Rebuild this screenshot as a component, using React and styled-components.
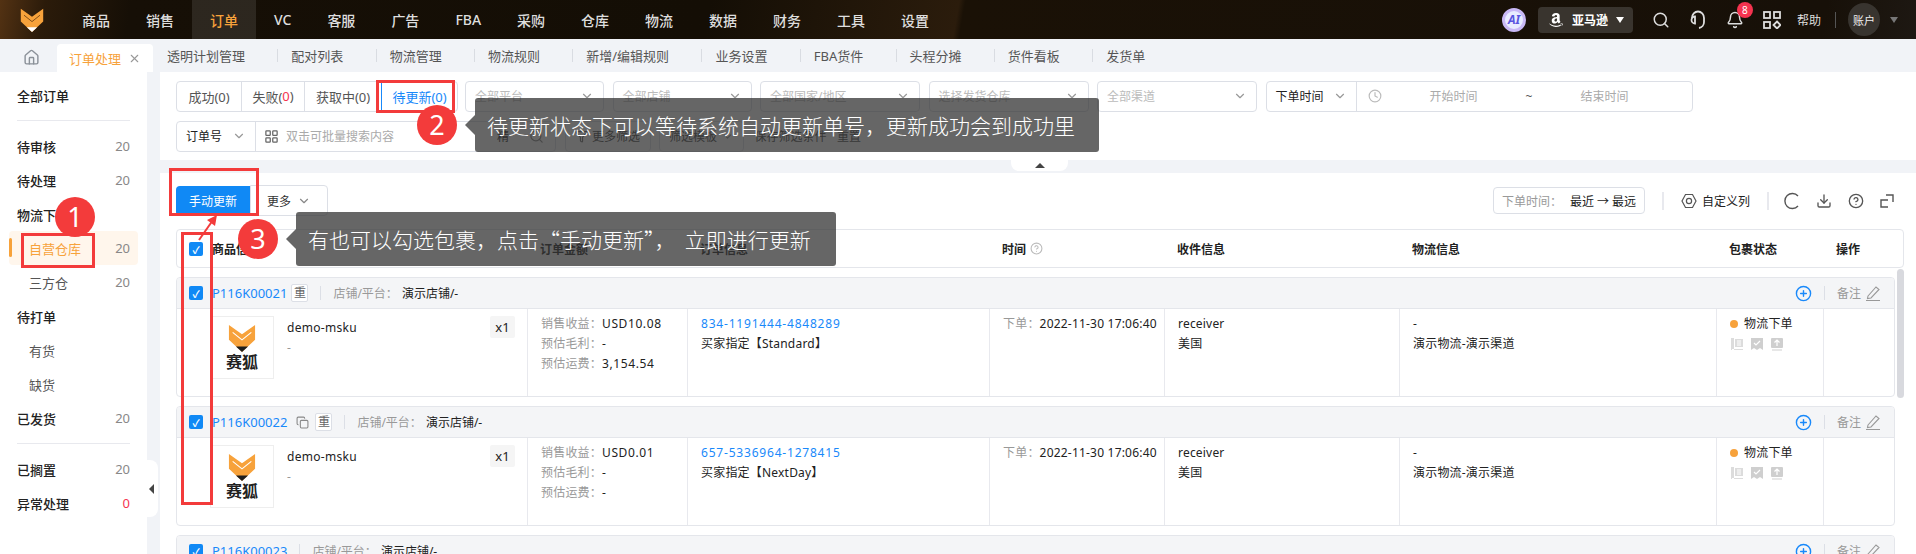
import React from "react";
import styled, { createGlobalStyle } from "styled-components";
import {
  House,
  X,
  ChevronDown,
  Search,
  Bell,
  Clock,
  Filter,
  Download,
  CircleHelp,
  CirclePlus,
  Copy,
  LayoutGrid,
} from "lucide-react";
import { FaAmazon } from "react-icons/fa";

const navItems = ["商品", "销售", "订单", "VC", "客服", "广告", "FBA", "采购", "仓库", "物流", "数据", "财务", "工具", "设置"];
const tabs = ["透明计划管理", "配对列表", "物流管理", "物流规则", "新增/编辑规则", "业务设置", "FBA货件", "头程分摊", "货件看板", "发货单"];

const sideItems = [
  { label: "全部订单", top: true },
  { divider: true },
  { label: "待审核", count: 20, top: true },
  { label: "待处理", count: 20, top: true },
  { label: "物流下单", top: true },
  { label: "自营仓库", count: 20, active: true },
  { label: "三方仓", count: 20 },
  { label: "待打单", top: true },
  { label: "有货" },
  { label: "缺货" },
  { label: "已发货", count: 20, top: true },
  { divider: true },
  { label: "已搁置", count: 20, top: true },
  { label: "异常处理", count: 0, top: true, danger: true },
];

const columns = [
  { label: "商品信息", left: 35 },
  { label: "订单金额" },
  { label: "订单信息" },
  { label: "时间", help: true },
  { label: "收件信息" },
  { label: "物流信息" },
  { label: "包裹状态" },
  { label: "操作" },
];

const orders = [
  {
    id: "P116K00021",
    income: "USD10.08",
    freight: "3,154.54",
    number: "834-1191444-4848289",
    buyer: "买家指定【Standard】",
  },
  {
    id: "P116K00022",
    copy: true,
    income: "USD0.01",
    freight: "-",
    number: "657-5336964-1278415",
    buyer: "买家指定【NextDay】",
  },
  { id: "P116K00023", short: true },
];

function Fox({ size, tip = "#1d1d1d", chevron = "#fff" }) {
  return (
    <svg width={size} height={size} viewBox="0 0 30 30">
      <path d="M1 1 L15 11 L29 1 V17 L15 30 L1 17 Z" fill="#f7a23b" />
      <path d="M5 9 L15 17 L25 9" fill="none" stroke={chevron} strokeWidth="1.2" />
      <path d="M8.5 24 H21.5 L15 30 Z" fill={tip} />
    </svg>
  );
}

function Headset() {
  return (
    <svg width="18" height="20" viewBox="0 0 18 20" fill="none" stroke="#ddd" strokeWidth="1.8">
      <path d="M3 8 A6 6.5 0 0 1 15 8 V12 A6 6 0 0 1 10 18" />
      <path d="M6 6.5 A3.5 3.5 0 0 0 6 13.5 Z" />
    </svg>
  );
}

function AppsIcon() {
  return (
    <svg width="18" height="18" viewBox="0 0 18 18" fill="none" stroke="#ddd" strokeWidth="1.8">
      <rect x="1" y="1" width="6" height="6" />
      <rect x="11" y="1" width="6" height="6" />
      <rect x="1" y="11" width="6" height="6" />
      <path d="M14 10.5 L17.5 14 L14 17.5 L10.5 14 Z" />
    </svg>
  );
}

function NutIcon() {
  return (
    <svg width="16" height="16" viewBox="0 0 16 16" fill="none" stroke="#555" strokeWidth="1.2">
      <path d="M4.5 1.5 H11.5 L15 8 L11.5 14.5 H4.5 L1 8 Z" />
      <circle cx="8" cy="8" r="2.6" />
    </svg>
  );
}

function RefreshArc() {
  return (
    <svg width="16" height="18" viewBox="0 0 16 18" fill="none" stroke="#555" strokeWidth="1.4">
      <path d="M14 4 A7.5 7.5 0 1 0 14 14" />
    </svg>
  );
}

function ExpandIcon() {
  return (
    <svg width="14" height="14" viewBox="0 0 14 14" fill="none" stroke="#555" strokeWidth="1.4">
      <path d="M6 1 H13 V8" />
      <path d="M8 6 H1 V13 H8" />
    </svg>
  );
}

function PenIcon() {
  return (
    <svg width="16" height="16" viewBox="0 0 16 16" fill="none" stroke="#999" strokeWidth="1.1">
      <path d="M3 11 L11 2 L14 4.5 L6 13 L2.5 13.5 Z" />
      <path d="M1 15.5 H15" />
    </svg>
  );
}

function PackIcons() {
  return (
    <PackRow>
      <svg width="14" height="14" viewBox="0 0 14 14">
        <path d="M1 1 H4 V13 H1 Z M5 2 H13 V10 H5 Z M2 13 H13 V12 H2 Z" fill="#dcdcdc" />
        <path d="M7 4 H11 M7 6 H11 M7 8 H11" stroke="#fff" />
      </svg>
      <svg width="14" height="14" viewBox="0 0 14 14">
        <path d="M1 1 H13 V13 L10 11 L7 13 L4 11 L1 13 Z" fill="#cfcfcf" />
        <path d="M4 6 L6 8 L10 4" stroke="#fff" strokeWidth="1.2" fill="none" />
      </svg>
      <svg width="14" height="14" viewBox="0 0 14 14">
        <rect x="1" y="1" width="12" height="10" rx="1" fill="#cfcfcf" />
        <path d="M7 9 V3 M4.5 5.5 L7 3 L9.5 5.5" stroke="#fff" strokeWidth="1.2" fill="none" />
        <path d="M2 13 H12" stroke="#cfcfcf" strokeWidth="1.2" />
      </svg>
    </PackRow>
  );
}

function Dropdown({ width, placeholder }) {
  return (
    <Select $w={width}>
      <span>{placeholder}</span>
      <ChevronDown size={14} color="#999" />
    </Select>
  );
}

function OrderCard({ order }) {
  return (
    <Card>
      <CardHead>
        <CheckBox>✓</CheckBox>
        <OrderId>{order.id}</OrderId>
        {order.copy && <CopyWrap><Copy size={13} color="#888" /></CopyWrap>}
        {!order.short && <RepeatTag>重</RepeatTag>}
        <ThinLine />
        <Muted>店铺/平台：</Muted>
        <span>演示店铺/-</span>
        <CardHeadRight>
          <CirclePlus size={17} color="#1989fa" />
          <ThinLine />
          <Muted>备注</Muted>
          <PenIcon />
        </CardHeadRight>
      </CardHead>
      {order.number && (
        <CardBody>
          <GoodsCell>
            <ProductImage>
              <Fox size={28} />
              <strong>赛狐</strong>
            </ProductImage>
            <GoodsText>
              <SkuName>demo-msku</SkuName>
              <Muted>-</Muted>
            </GoodsText>
            <QtyTag>x1</QtyTag>
          </GoodsCell>
          <Cell>
            <InfoLine><Muted>销售收益：</Muted><Amount>{order.income}</Amount></InfoLine>
            <InfoLine><Muted>预估毛利：</Muted>-</InfoLine>
            <InfoLine><Muted>预估运费：</Muted><Amount>{order.freight}</Amount></InfoLine>
          </Cell>
          <Cell>
            <InfoLine><LinkText>{order.number}</LinkText></InfoLine>
            <InfoLine>{order.buyer}</InfoLine>
          </Cell>
          <Cell>
            <InfoLine><Muted>下单：</Muted>2022-11-30 17:06:40</InfoLine>
          </Cell>
          <Cell>
            <InfoLine>receiver</InfoLine>
            <InfoLine>美国</InfoLine>
          </Cell>
          <Cell>
            <InfoLine>-</InfoLine>
            <InfoLine>演示物流-演示渠道</InfoLine>
          </Cell>
          <Cell>
            <InfoLine><StatusDot />物流下单</InfoLine>
            <PackIcons />
          </Cell>
          <Cell />
        </CardBody>
      )}
    </Card>
  );
}

export default function App() {
  return (
    <Page>
      <GlobalStyle />
      <TopBar>
        <LogoBox><Fox size={24} tip="#fff" chevron="#7a4a16" /></LogoBox>
        <Nav>
          {navItems.map((item) => (
            <NavItem key={item} $active={item === "订单"}>{item}</NavItem>
          ))}
        </Nav>
        <TopRight>
          <AiBadge>AI</AiBadge>
          <PlatformBox>
            <FaAmazon size={16} color="#fff" />
            <span>亚马逊</span>
            <Caret $color="#fff" />
          </PlatformBox>
          <TopIcon><Search size={18} color="#ddd" /></TopIcon>
          <TopIcon><Headset /></TopIcon>
          <TopIcon>
            <Bell size={18} color="#ddd" />
            <NoticeBadge>8</NoticeBadge>
          </TopIcon>
          <TopIcon><AppsIcon /></TopIcon>
          <HelpText>帮助</HelpText>
          <TopLine />
          <Avatar>账户</Avatar>
          <Caret $color="#777" />
        </TopRight>
      </TopBar>

      <TabBar>
        <HomeTab><House size={17} color="#8b9199" /></HomeTab>
        <ActiveTab>
          订单处理
          <X size={13} color="#999" />
        </ActiveTab>
        {tabs.map((tab, index) => (
          <Tab key={tab} $last={index === tabs.length - 1}>{tab}</Tab>
        ))}
      </TabBar>

      <Body>
        <Sidebar>
          {sideItems.map((item, index) =>
            item.divider ? (
              <SideDivider key={index} />
            ) : (
              <SideRow key={item.label} $top={item.top} $active={item.active}>
                <span>{item.label}</span>
                {item.count !== undefined && <SideCount $danger={item.danger}>{item.count}</SideCount>}
              </SideRow>
            )
          )}
          <CollapseHandle />
        </Sidebar>

        <Main>
          <FilterPanel>
            <FilterRow>
              <StatusGroup>
                <StatusButton $w={64}>成功(0)</StatusButton>
                <StatusButton $w={63}>失败(<Danger>0</Danger>)</StatusButton>
                <StatusButton $w={77}>获取中(0)</StatusButton>
                <StatusButton $w={76} $active>待更新(0)</StatusButton>
              </StatusGroup>
              <Dropdown width={139} placeholder="全部平台" />
              <Dropdown width={139} placeholder="全部店铺" />
              <Dropdown width={160} placeholder="全部国家/地区" />
              <Dropdown width={160} placeholder="选择发货仓库" />
              <Dropdown width={160} placeholder="全部渠道" />
              <JoinedField $w={427}>
                <JoinedSelect $w={90}>
                  下单时间
                  <ChevronDown size={14} color="#999" />
                </JoinedSelect>
                <DateRange>
                  <Clock size={14} color="#bbb" />
                  <DateText>开始时间</DateText>
                  <Tilde>~</Tilde>
                  <DateText>结束时间</DateText>
                </DateRange>
              </JoinedField>
            </FilterRow>
            <FilterRow>
              <JoinedField $w={380}>
                <JoinedSelect $w={79}>
                  订单号
                  <ChevronDown size={14} color="#999" />
                </JoinedSelect>
                <BatchInput>
                  <LayoutGrid size={15} color="#666" />
                  <Placeholder>双击可批量搜索内容</Placeholder>
                  <Exact>精</Exact>
                  <Search size={15} color="#888" />
                </BatchInput>
              </JoinedField>
              <GhostButton $w={86}><Filter size={13} color="#666" />更多筛选</GhostButton>
              <GhostButton $w={85}>筛选模板<ChevronDown size={13} color="#999" /></GhostButton>
              <PlainAction>保存筛选条件</PlainAction>
              <PlainAction>重置</PlainAction>
            </FilterRow>
            <FoldTab />
          </FilterPanel>

          <ListPanel>
            <Toolbar>
              <PrimaryButton>手动更新</PrimaryButton>
              <MoreButton>更多<ChevronDown size={14} color="#888" /></MoreButton>
              <ToolbarRight>
                <SortBox>
                  <SortLabel>下单时间：</SortLabel>
                  最近<SortArrow>→</SortArrow>最远
                </SortBox>
                <ToolLine />
                <ColumnSetting><NutIcon />自定义列</ColumnSetting>
                <ToolLine />
                <ToolIcons>
                  <RefreshArc />
                  <Download size={16} color="#555" />
                  <CircleHelp size={16} color="#555" />
                  <ExpandIcon />
                </ToolIcons>
              </ToolbarRight>
            </Toolbar>

            <TableHead>
              <HeadCheck>✓</HeadCheck>
              {columns.map((col) => (
                <HeadCell key={col.label} $left={col.left}>
                  {col.label}
                  {col.help && <CircleHelp size={13} color="#bbb" />}
                </HeadCell>
              ))}
            </TableHead>

            <CardList>
              {orders.map((order) => (
                <OrderCard key={order.id} order={order} />
              ))}
            </CardList>
            <ScrollThumb />
          </ListPanel>
        </Main>
      </Body>

      <RedFrame $x={376} $y={80} $w={79} $h={33} />
      <RedFrame $x={169} $y={168} $w={90} $h={48} />
      <RedFrame $x={21} $y={233} $w={74} $h={35} />
      <RedFrame $x={181} $y={232} $w={32} $h={273} />
      <ArrowMark width="24" height="28" viewBox="0 0 24 28">
        <path d="M3 26 L17 6" stroke="#f33b3b" strokeWidth="2" />
        <path d="M21 1 L11 6 L19 12 Z" fill="#f33b3b" />
      </ArrowMark>

      <StepDot $x={55} $y={197}>1</StepDot>
      <StepDot $x={417} $y={105}>2</StepDot>
      <StepDot $x={238} $y={219}>3</StepDot>
      <Callout $x={475} $y={98} $w={624} $h={54}>待更新状态下可以等待系统自动更新单号，更新成功会到成功里</Callout>
      <Callout $x={296} $y={212} $w={540} $h={54}>有也可以勾选包裹，点击“手动更新”，{"\u00a0\u00a0"}立即进行更新</Callout>
    </Page>
  );
}

const GlobalStyle = createGlobalStyle`
  html, body {
    margin: 0;
    padding: 0;
    background: #f1f3f7;
  }
  * {
    box-sizing: border-box;
  }
`;

const Page = styled.div`
  position: relative;
  width: 1916px;
  height: 554px;
  overflow: hidden;
  background: #f1f3f7;
  color: #222;
  font-family: "Noto Sans", "Noto Sans CJK SC", sans-serif;
  font-size: 12px;
`;

const TopBar = styled.header`
  display: flex;
  align-items: center;
  height: 39px;
  background: linear-gradient(100deg, #533213 0, #2b1b0a 45px, #160f06 130px, #140e05 700px, #2b1c0c 945px, #1a1106 951px, #171008 1800px, #1f1a15 1916px);
`;

const LogoBox = styled.div`
  display: flex;
  justify-content: center;
  width: 64px;
`;

const Nav = styled.nav`
  display: flex;
  height: 100%;
`;

const NavItem = styled.div`
  display: flex;
  align-items: center;
  padding: 0 18px;
  font-size: 14px;
  font-weight: 500;
  color: ${(p) => (p.$active ? "#f7a23b" : "#dedede")};
  background: ${(p) => (p.$active ? "rgba(255,255,255,0.1)" : "none")};
`;

const TopRight = styled.div`
  display: flex;
  align-items: center;
  margin-left: auto;
  padding-right: 18px;
`;

const AiBadge = styled.div`
  display: flex;
  align-items: center;
  justify-content: center;
  width: 24px;
  height: 24px;
  border-radius: 50%;
  border: 3px solid #c8b8f5;
  background: #e8ecff;
  color: #5a55e0;
  font-size: 12px;
  font-weight: 700;
  font-style: italic;
`;

const PlatformBox = styled.div`
  display: flex;
  align-items: center;
  gap: 8px;
  width: 95px;
  height: 26px;
  margin: 0 10px 0 12px;
  padding-left: 10px;
  border-radius: 4px;
  background: #39342e;
  color: #fff;
  font-weight: 700;
`;

const Caret = styled.i`
  width: 0;
  height: 0;
  border-left: 4px solid transparent;
  border-right: 4px solid transparent;
  border-top: 6px solid ${(p) => p.$color};
`;

const TopIcon = styled.div`
  position: relative;
  display: flex;
  justify-content: center;
  width: 37px;
`;

const NoticeBadge = styled.span`
  position: absolute;
  top: -9px;
  left: 20px;
  width: 16px;
  height: 16px;
  border-radius: 50%;
  background: #f5334f;
  color: #fff;
  font-size: 10px;
  line-height: 16px;
  text-align: center;
`;

const HelpText = styled.span`
  margin-left: 6px;
  color: #ddd;
`;

const TopLine = styled.i`
  width: 1px;
  height: 16px;
  margin: 0 12px 0 14px;
  background: #555;
`;

const Avatar = styled.div`
  display: flex;
  align-items: center;
  justify-content: center;
  width: 32px;
  height: 33px;
  margin-right: 10px;
  border-radius: 50%;
  background: #38342f;
  color: #eee;
  font-size: 11px;
`;

const TabBar = styled.div`
  display: flex;
  align-items: flex-end;
  height: 33px;
`;

const HomeTab = styled.div`
  display: flex;
  justify-content: center;
  width: 57px;
  padding: 0 0 6px 6px;
`;

const ActiveTab = styled.div`
  display: flex;
  align-items: center;
  justify-content: space-between;
  width: 96px;
  height: 28px;
  margin-right: 14px;
  padding: 0 12px 0 12px;
  border-radius: 4px 4px 0 0;
  background: #fff;
  color: #f7a23b;
  font-size: 13px;
`;

const Tab = styled.div`
  display: flex;
  align-items: center;
  height: 13px;
  margin: 0 13px 10px 0;
  padding-right: 32.3px;
  border-right: ${(p) => (p.$last ? "none" : "1px solid #d9dce2")};
  color: #555;
  font-size: 13px;
`;

const Body = styled.div`
  display: flex;
  height: 482px;
`;

const Sidebar = styled.aside`
  position: relative;
  width: 147px;
  margin-right: 13px;
  padding: 6px 17px 0;
  background: #fff;
`;

const SideDivider = styled.div`
  height: 1px;
  margin: 8px 0;
  background: #e8e9ee;
`;

const SideRow = styled.div`
  position: relative;
  display: flex;
  align-items: center;
  justify-content: space-between;
  height: 34px;
  margin: 0 ${(p) => (p.$active ? "-8px" : "0")};
  padding: 0 ${(p) => (p.$active ? "8px" : "0")} 0 ${(p) => (p.$active ? "20px" : p.$top ? "0" : "12px")};
  border-radius: 4px;
  background: ${(p) => (p.$active ? "#fff6ec" : "none")};
  color: ${(p) => (p.$active ? "#f7a23b" : p.$top ? "#222" : "#555")};
  font-size: 13px;
  font-weight: ${(p) => (p.$top ? 500 : 400)};

  ${(p) =>
    p.$active &&
    `&::before {
      content: "";
      position: absolute;
      left: 0;
      top: 7px;
      width: 3px;
      height: 19px;
      border-radius: 2px;
      background: #f7a23b;
    }`}
`;

const SideCount = styled.span`
  color: ${(p) => (p.$danger ? "#f5334f" : "#888")};
  font-weight: 400;
`;

const CollapseHandle = styled.div`
  position: absolute;
  top: 388px;
  right: -11px;
  width: 11px;
  height: 57px;
  border-radius: 0 8px 8px 0;
  background: #fff;

  &::after {
    content: "";
    position: absolute;
    top: 24px;
    left: 2px;
    border-top: 5px solid transparent;
    border-bottom: 5px solid transparent;
    border-right: 5px solid #444;
  }
`;

const Main = styled.main`
  display: flex;
  flex: 1;
  flex-direction: column;
  gap: 13px;
  min-width: 0;
`;

const FilterPanel = styled.section`
  position: relative;
  display: flex;
  flex-direction: column;
  flex-shrink: 0;
  gap: 8px;
  height: 88px;
  padding: 8px 16px 0;
  background: #fff;
`;

const FilterRow = styled.div`
  display: flex;
  align-items: center;
  gap: 8.5px;
  height: 32px;
`;

const StatusGroup = styled.div`
  display: flex;
  height: 31px;
  margin-right: -1.5px;
  border: 1px solid #dcdfe6;
  border-radius: 4px;
  overflow: hidden;
`;

const StatusButton = styled.div`
  display: flex;
  align-items: center;
  justify-content: center;
  width: ${(p) => p.$w}px;
  border-left: 1px solid ${(p) => (p.$active ? "#1989fa" : "#dcdfe6")};
  color: ${(p) => (p.$active ? "#1989fa" : "#555")};
  font-size: 13px;

  &:first-child {
    border-left: none;
  }
`;

const Danger = styled.span`
  color: #f5334f;
`;

const Select = styled.div`
  display: flex;
  align-items: center;
  justify-content: space-between;
  width: ${(p) => p.$w}px;
  height: 31px;
  padding: 0 9px 0 9px;
  border: 1px solid #dcdfe6;
  border-radius: 4px;
  color: #bbb;
  font-size: 12px;
`;

const JoinedField = styled.div`
  display: flex;
  width: ${(p) => p.$w}px;
  height: 31px;
  border: 1px solid #dcdfe6;
  border-radius: 4px;
`;

const JoinedSelect = styled.div`
  display: flex;
  align-items: center;
  justify-content: space-between;
  flex-shrink: 0;
  width: ${(p) => p.$w}px;
  padding: 0 9px;
  border-right: 1px solid #dcdfe6;
  color: #222;
`;

const DateRange = styled.div`
  display: flex;
  flex: 1;
  align-items: center;
  padding: 0 15px 0 11px;
`;

const DateText = styled.span`
  flex: 1;
  color: #aaa;
  text-align: center;
`;

const Tilde = styled.span`
  color: #555;
`;

const BatchInput = styled.div`
  display: flex;
  flex: 1;
  align-items: center;
  padding: 0 11px 0 8px;
`;

const Placeholder = styled.span`
  flex: 1;
  margin-left: 7px;
  color: #aaa;
`;

const Exact = styled.span`
  margin-right: 20px;
  color: #222;
`;

const GhostButton = styled.div`
  display: flex;
  align-items: center;
  justify-content: center;
  gap: 4px;
  width: ${(p) => p.$w}px;
  height: 31px;
  border: 1px solid #dcdfe6;
  border-radius: 4px;
  color: #444;
`;

const PlainAction = styled.span`
  margin-left: 2px;
  color: #444;
`;

const FoldTab = styled.div`
  position: absolute;
  top: 88px;
  left: 851px;
  width: 57px;
  height: 11px;
  border-radius: 0 0 8px 8px;
  background: #fff;

  &::after {
    content: "";
    position: absolute;
    top: 3px;
    left: 24px;
    border-left: 5px solid transparent;
    border-right: 5px solid transparent;
    border-bottom: 5px solid #444;
  }
`;

const ListPanel = styled.section`
  position: relative;
  flex: 1;
  min-height: 0;
  padding: 12px 12px 0 16px;
  background: #fff;
  overflow: hidden;
`;

const Toolbar = styled.div`
  display: flex;
  align-items: center;
  height: 31px;
`;

const PrimaryButton = styled.div`
  display: flex;
  align-items: center;
  justify-content: center;
  width: 74px;
  height: 30px;
  border-radius: 4px 0 0 4px;
  background: #1089f5;
  color: #fff;
`;

const MoreButton = styled.div`
  display: flex;
  align-items: center;
  justify-content: center;
  gap: 6px;
  width: 78px;
  height: 31px;
  border: 1px solid #dcdfe6;
  border-radius: 0 4px 4px 0;
  color: #333;
`;

const ToolbarRight = styled.div`
  display: flex;
  align-items: center;
  margin-left: auto;
`;

const SortBox = styled.div`
  display: flex;
  align-items: center;
  height: 27px;
  padding: 0 8px;
  border: 1px solid #dcdfe6;
  border-radius: 4px;
`;

const SortLabel = styled.span`
  margin-right: 8px;
  color: #999;
`;

const SortArrow = styled.span`
  margin: 0 3px;
`;

const ToolLine = styled.i`
  width: 2px;
  height: 18px;
  margin: 0 17px;
  background: #e8e9ee;
`;

const ColumnSetting = styled.div`
  display: flex;
  align-items: center;
  gap: 5px;
`;

const ToolIcons = styled.div`
  display: flex;
  align-items: center;
  gap: 16px;
  margin-left: -2px;
  padding-right: 10px;
`;

const TableHead = styled.div`
  position: relative;
  display: grid;
  grid-template-columns: 350px 160px 302px 175px 235px 317px 107px 1fr;
  align-items: center;
  height: 39px;
  margin-top: 13px;
  border: 1px solid #e4e6eb;
  border-radius: 4px;
`;

const HeadCell = styled.div`
  display: flex;
  align-items: center;
  gap: 4px;
  padding-left: ${(p) => p.$left || 13}px;
  color: #222;
  font-weight: 700;
`;

const CheckBox = styled.span`
  display: flex;
  align-items: center;
  justify-content: center;
  flex-shrink: 0;
  width: 14px;
  height: 14px;
  margin-right: 5px;
  border-radius: 2px;
  background: #1089f5;
  color: #fff;
  font-size: 10px;
  font-weight: 700;
`;

const HeadCheck = styled(CheckBox)`
  position: absolute;
  top: 12px;
  left: 12px;
`;

const CardList = styled.div`
  display: flex;
  flex-direction: column;
  gap: 9px;
  margin: 9px 9px 0 0;
`;

const Card = styled.article`
  border: 1px solid #e4e6eb;
  border-radius: 4px;
  overflow: hidden;
`;

const CardHead = styled.div`
  display: flex;
  align-items: center;
  gap: 4px;
  height: 31px;
  padding: 0 13px 0 12px;
  border-bottom: 1px solid #e4e6eb;
  background: #f4f5f7;
`;

const OrderId = styled.span`
  color: #1989fa;
  font-size: 13px;
`;

const CopyWrap = styled.span`
  display: flex;
  margin: 0 2px 0 5px;
`;

const RepeatTag = styled.span`
  width: 17px;
  height: 18px;
  border: 1px solid #dcdfe6;
  border-radius: 2px;
  background: #fff;
  color: #666;
  line-height: 16px;
  text-align: center;
`;

const ThinLine = styled.i`
  width: 1px;
  height: 14px;
  margin: 0 8px;
  background: #dcdfe6;
`;

const Muted = styled.span`
  color: #999;
`;

const CardHeadRight = styled.div`
  display: flex;
  align-items: center;
  gap: 4px;
  margin-left: auto;
`;

const CardBody = styled.div`
  display: grid;
  grid-template-columns: 350px 160px 302px 175px 235px 317px 107px 1fr;
  height: 87px;
`;

const Cell = styled.div`
  padding: 5px 0 0 13px;
  border-left: 1px solid #e8e9ee;
`;

const GoodsCell = styled.div`
  display: flex;
  padding: 7px 12px 0 33px;
`;

const ProductImage = styled.div`
  display: flex;
  flex-direction: column;
  align-items: center;
  justify-content: center;
  flex-shrink: 0;
  width: 64px;
  height: 63px;
  border: 1px solid #eee;

  strong {
    font-size: 16px;
    line-height: 20px;
    color: #222;
  }
`;

const GoodsText = styled.div`
  flex: 1;
  padding: 2px 0 0 13px;
  line-height: 20px;
  font-size: 12px;
`;

const SkuName = styled.div`
  letter-spacing: 0.3px;
`;

const QtyTag = styled.span`
  width: 25px;
  height: 22px;
  border-radius: 2px;
  background: #f5f5f5;
  font-size: 13px;
  line-height: 22px;
  text-align: center;
`;

const InfoLine = styled.div`
  height: 20px;
  line-height: 20px;
  letter-spacing: 0.2px;
  white-space: nowrap;
`;

const Amount = styled.span`
  letter-spacing: 0.6px;
`;

const LinkText = styled.span`
  color: #1989fa;
  letter-spacing: 0.8px;
`;

const StatusDot = styled.i`
  display: inline-block;
  width: 8px;
  height: 8px;
  margin-right: 6px;
  border-radius: 50%;
  background: #f7a23b;
`;

const PackRow = styled.div`
  display: flex;
  gap: 6px;
  padding-top: 3px;
`;

const ScrollThumb = styled.div`
  position: absolute;
  top: 96px;
  left: 1737px;
  width: 7px;
  height: 129px;
  border-radius: 4px;
  background: #d8d9de;
`;

const RedFrame = styled.div`
  position: absolute;
  top: ${(p) => p.$y}px;
  left: ${(p) => p.$x}px;
  width: ${(p) => p.$w}px;
  height: ${(p) => p.$h}px;
  border: 3px solid #f33b3b;
`;

const ArrowMark = styled.svg`
  position: absolute;
  top: 214px;
  left: 196px;
`;

const StepDot = styled.div`
  position: absolute;
  top: ${(p) => p.$y}px;
  left: ${(p) => p.$x}px;
  width: 40px;
  height: 40px;
  border-radius: 50%;
  background: #f33b3b;
  color: #fff;
  font-size: 27px;
  line-height: 40px;
  text-align: center;
`;

const Callout = styled.div`
  position: absolute;
  top: ${(p) => p.$y}px;
  left: ${(p) => p.$x}px;
  width: ${(p) => p.$w}px;
  height: ${(p) => p.$h}px;
  padding-left: 12px;
  border-radius: 3px;
  background: rgba(51, 51, 51, 0.75);
  color: #fff;
  font-family: "Noto Sans CJK SC", sans-serif;
  font-size: 21px;
  font-weight: 300;
  line-height: 54px;
  white-space: nowrap;

  &::before {
    content: "";
    position: absolute;
    top: 17px;
    left: -10px;
    border-top: 10px solid transparent;
    border-bottom: 10px solid transparent;
    border-right: 10px solid rgba(51, 51, 51, 0.75);
  }
`;
